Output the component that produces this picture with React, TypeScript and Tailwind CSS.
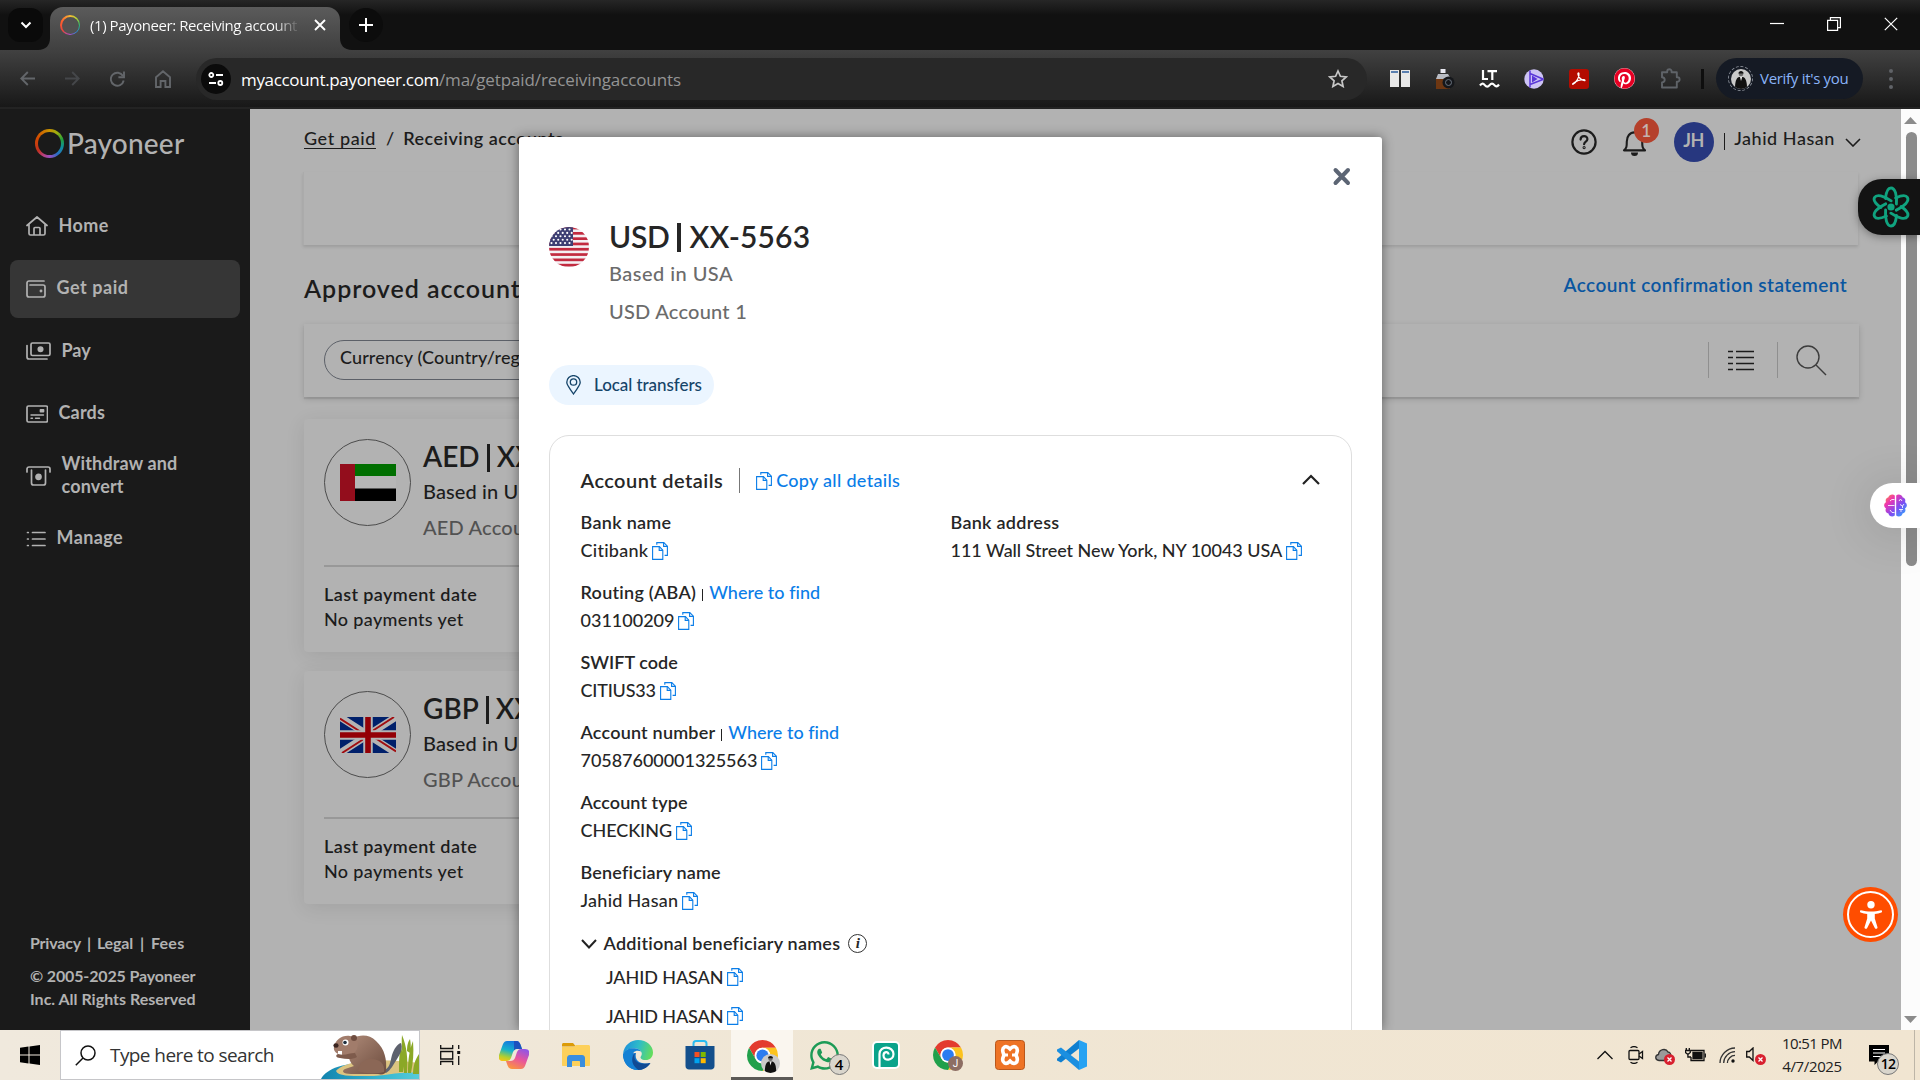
import React from 'react';
import { FaWhatsapp, FaPinterest } from 'react-icons/fa';

const cx = (...parts: (string | undefined)[]) => parts.filter(Boolean).join(' ');

/* ---------- shared icons ---------- */

function CopyIcon() {
  return (
    <svg width="16" height="18" viewBox="0 0 16 18" fill="none" stroke="#0a7de8" strokeWidth="1.1" className="mt-px shrink-0">
      <path d="M.6 4.6h6.8l3.4 3.6v9.2H.6z" />
      <path d="M7.2 4.8v3.6h3.6" />
      <path d="M4.8 2.8V.6h7l3.6 3.6v9.2h-2.8" />
      <path d="M11.6.8v3.6h3.6" />
    </svg>
  );
}

function ChromeLogo({ size }: { size: number }) {
  return (
    <svg width={size} height={size} viewBox="0 0 48 48">
      <path fill="#e33b2e" d="M24 12H44.78A24 24 0 0 0 3.22 12L13.6 30A12 12 0 0 1 24 12Z" />
      <path fill="#fcc31e" d="M44.78 12A24 24 0 0 1 24 48L34.39 30A12 12 0 0 0 24 12Z" />
      <path fill="#21a04b" d="M3.22 12L13.6 30A12 12 0 0 0 34.39 30L24 48A24 24 0 0 1 3.22 12Z" />
      <circle cx="24" cy="24" r="12" fill="#fff" />
      <circle cx="24" cy="24" r="9.4" fill="#2c7cf0" />
    </svg>
  );
}

function Portrait({ size }: { size: number }) {
  return (
    <svg width={size} height={size} viewBox="0 0 20 20">
      <defs>
        <clipPath id="portrait"><circle cx="10" cy="10" r="10" /></clipPath>
      </defs>
      <g clipPath="url(#portrait)">
        <rect width="20" height="20" fill="#c9c9c9" />
        <path d="M4 20c0-7 1-11 4-12h4c3 1 4 5 4 12z" fill="#101010" />
        <path d="M9 8l1 4 1.2-4z" fill="#eee" />
        <circle cx="10" cy="5" r="2.3" fill="#6b6b6b" />
        <path d="M7.4 4.6c0-3.4 5.2-3.4 5.2 0z" fill="#111" />
      </g>
    </svg>
  );
}

/* ---------- browser chrome ---------- */

function TabStrip() {
  return (
    <div className="flex h-[50px] shrink-0 items-start bg-[linear-gradient(#262626,#111_30%)]">
      <div className="mt-2 ml-2 flex h-[34px] w-[35px] items-center justify-center rounded-xl bg-[#0a0a0a]">
        <svg width="12" height="8" viewBox="0 0 12 8" fill="none" stroke="#fff" strokeWidth="2"><path d="M1.5 1.5L6 6l4.5-4.5" /></svg>
      </div>
      <div className="flex h-[43px] w-[7px] items-end justify-end self-end">
        <svg className="shrink-0" width="12" height="12" viewBox="0 0 12 12"><path d="M0 12c8 0 12-5 12-12v12z" fill="#414141" /></svg>
      </div>
      <div className="mt-[7px] flex h-[43px] w-[290px] items-center rounded-t-[13px] bg-[linear-gradient(#5b5b5b,#404040)] pb-[7px] pl-[10px]">
        <div className="flex size-5 items-center justify-center rounded-full bg-[conic-gradient(#f5b836,#b9d432_12%,#2fbf71_25%,#2490e8_38%,#b04fd0_50%,#e8453c_64%,#ff5f2e_82%,#f5b836)]">
          <div className="size-[17px] rounded-full bg-[#515151]" />
        </div>
        <span className="ml-[10px] w-[210px] overflow-hidden bg-[linear-gradient(90deg,#fff_88%,#6a6a6a_98%)] bg-clip-text font-['Open_Sans'] text-[15px] tracking-[-0.43px] whitespace-nowrap text-transparent">
          (1) Payoneer: Receiving account
        </span>
        <svg className="ml-[14px]" width="12" height="12" viewBox="0 0 12 12" stroke="#fff" strokeWidth="1.9"><path d="M1 1l10 10M11 1L1 11" /></svg>
      </div>
      <div className="flex h-[43px] w-[9px] items-end self-end">
        <svg className="shrink-0" width="12" height="12" viewBox="0 0 12 12"><path d="M0 0c0 7 4 12 12 12H0z" fill="#414141" /></svg>
      </div>
      <div className="mt-2 flex size-[34px] items-center justify-center rounded-full bg-[#0c0c0c]">
        <svg width="14" height="14" viewBox="0 0 14 14" stroke="#fff" strokeWidth="2"><path d="M7 0v14M0 7h14" /></svg>
      </div>
      <div className="mt-[17px] mr-[22px] ml-auto flex items-center gap-[43px]">
        <svg width="14" height="14" viewBox="0 0 14 14" stroke="#fff" strokeWidth="1.2"><path d="M0 6.5h14" /></svg>
        <svg width="14" height="14" viewBox="0 0 14 14" fill="none" stroke="#fff" strokeWidth="1.2"><path d="M.6 3.4h10v10h-10zM3.4 3V.6h10v10H11" /></svg>
        <svg width="14" height="14" viewBox="0 0 14 14" stroke="#fff" strokeWidth="1.2"><path d="M.8.8l12.4 12.4M13.2.8L.8 13.2" /></svg>
      </div>
    </div>
  );
}

function Extensions() {
  return (
    <div className="flex items-center">
      <svg width="20" height="17" viewBox="0 0 20 17"><path d="M0 0h9v17H0zM11 0h9v17h-9z" fill="#e8e8e8" /><path d="M1 1h7v2H1zM12 1h7v2h-7z" fill="#5a7fb0" /></svg>
      <svg className="ml-[25px]" width="20" height="20" viewBox="0 0 20 20">
        <path d="M1 9h14v11H1z" fill="#6e3712" /><path d="M3 5h10l3 5H1z" fill="#b9bcc4" /><path d="M5.5 0h5v4h-5z" fill="#e9e9f2" />
        <circle cx="13.5" cy="13.5" r="6" fill="#15171b" /><circle cx="13.5" cy="13.5" r="3" fill="none" stroke="#6b7480" strokeWidth="1" />
      </svg>
      <svg className="mt-px ml-[24px]" width="21" height="18" viewBox="0 0 21 18" fill="none" stroke="#fff" strokeWidth="2.2">
        <path d="M4 0v9h5M8.5 1.1h9.500M13.300 1.100v9" /><path d="M1 15.500c1.800-2.400 3.200-2.400 4.800-.4s3.200 2 4.800 0 3.200-2 4.800 0 3.200 1.400 4.600-.6" />
      </svg>
      <svg className="ml-[24px]" width="20" height="20" viewBox="0 0 20 20">
        <circle cx="10" cy="10" r="9.7" fill="#cdc3f5" />
        <path d="M6 1.500v17M6 15.500l13.500-5.300M6 4.500l13.500 5.700" stroke="#5a37d8" strokeWidth="1.500" fill="none" /><path d="M8 6.500l5.500 3.500L8 13.500z" fill="#5a37d8" />
      </svg>
      <svg className="ml-[25px]" width="20" height="20" viewBox="0 0 20 20">
        <rect width="20" height="20" rx="3" fill="#b30b00" />
        <path d="M4 15.300c3.500-2 6.600-7.600 6-10.800-.2-1-1.500-.5-1 1 .8 3.200 3 5.500 6.500 6.200.9.200.6-1-.6-1-3.800 0-7 1-10.500 3.600-.9.700-1.100 1.100-.4 1z" fill="none" stroke="#fff" strokeWidth="1.200" />
      </svg>
      <div className="ml-[25px] flex size-[21px] items-center justify-center rounded-full bg-white"><FaPinterest size={21} color="#e60023" /></div>
      <svg className="ml-[25px]" width="21" height="21" viewBox="0 0 21 21" fill="none" stroke="#5f6368" strokeWidth="1.900">
        <path d="M2 4.300h5.200V3.500a2.200 2.200 0 0 1 4.400 0v.8h5.200v5h.6a2.200 2.200 0 0 1 0 4.400h-.6v5.800H2v-5c3.600-.3 3.600-5 0-5.300z" strokeLinejoin="round" />
      </svg>
      <div className="ml-[20px] h-5 w-[3px] bg-[#0e0e0e]" />
    </div>
  );
}

function Toolbar() {
  return (
    <div className="flex h-[59px] shrink-0 items-center border-b-2 border-[#232323] bg-[linear-gradient(#414141,#181818)]">
      <div className="flex items-center gap-[30px] pl-5">
        <svg width="15" height="15" viewBox="0 0 15 15" fill="none" stroke="#63666a" strokeWidth="1.900"><path d="M15 7.500H1.500M7.800 1L1.300 7.500l6.500 6.500" /></svg>
        <svg width="15" height="15" viewBox="0 0 15 15" fill="none" stroke="#45474a" strokeWidth="1.900"><path d="M0 7.500h13.500M7.200 1l6.500 6.500L7.200 14" /></svg>
        <svg width="15" height="16" viewBox="0 0 15 16" fill="none" stroke="#63666a" strokeWidth="1.900"><path d="M13 5A6.500 6.500 0 1 0 13.700 9.500" /><path d="M14 .5v5.800H8.400" /></svg>
        <svg width="16" height="18" viewBox="0 0 16 18" fill="none" stroke="#63666a" strokeWidth="1.900"><path d="M1 7.200L8 1.300l7 5.900V17h-4.600v-6H5.600v6H1z" /></svg>
      </div>
      <div className="ml-[25px] flex h-[42px] w-[1171px] items-center rounded-full bg-[#282828] pl-[5px]">
        <div className="flex size-[30px] items-center justify-center rounded-full bg-[#0b0b0b]">
          <svg width="16" height="14" viewBox="0 0 16 14" fill="none" stroke="#fff" strokeWidth="1.800"><circle cx="3.300" cy="3" r="2" /><path d="M8 3h7M1 11h7" /><circle cx="12.300" cy="11" r="2" /></svg>
        </div>
        <span className="mt-[2px] ml-[10px] font-['Open_Sans'] text-[17px] tracking-[-0.33px] whitespace-nowrap text-white">myaccount.payoneer.com</span>
        <span className="mt-[2px] font-['Open_Sans'] text-[17px] tracking-[-0.11px] whitespace-nowrap text-[#949494]">/ma/getpaid/receivingaccounts</span>
        <svg className="mr-[19px] ml-auto" width="20" height="19" viewBox="0 0 20 19" fill="none" stroke="#c7c7c7" strokeWidth="1.700"><path d="M10 2l2.400 5.300 5.800.6-4.300 3.900 1.200 5.700L10 14.600l-5.100 2.900 1.200-5.700L1.800 7.900l5.800-.6z" /></svg>
      </div>
      <div className="pl-[23px]"><Extensions /></div>
      <div className="ml-3 flex h-[41px] w-[147px] items-center rounded-full bg-[#151a24] pl-3">
        <div className="flex size-[25px] items-center justify-center rounded-full border-[1.500px] border-dashed border-[#8a8f98]"><Portrait size={20} /></div>
        <span className="ml-[7px] font-['Open_Sans'] text-[15px] tracking-[-0.3px] whitespace-nowrap text-[#8ab4f8]">Verify it's you</span>
      </div>
      <div className="ml-[26px] flex flex-col gap-1">
        {[0, 1, 2].map((i) => <div key={i} className="size-[4px] rounded-full bg-[#606367]" />)}
      </div>
    </div>
  );
}

/* ---------- sidebar ---------- */

const line = { fill: 'none', stroke: '#b2b2b2', strokeWidth: 1.7, strokeLinejoin: 'round', strokeLinecap: 'round' } as const;

const NAV = [
  { label: 'Home', track: 'tracking-[0.4px]', icon: <svg width="22" height="20" viewBox="0 0 22 20" {...line}><path d="M1 9.500L11 1l10 8.500M3 8.500v9a1.500 1.500 0 0 0 1.500 1.500h13a1.500 1.500 0 0 0 1.500-1.500v-9M8 19v-6.500a1 1 0 0 1 1-1h4a1 1 0 0 1 1 1V19" /></svg> },
  { label: 'Get paid', track: 'tracking-[0.55px]', active: true, icon: <svg width="20" height="18" viewBox="0 0 20 18" {...line}><path d="M18 1H3a2 2 0 0 0-2 2v12a2 2 0 0 0 2 2h14a2 2 0 0 0 2-2V7a2 2 0 0 0-2-2H4" /><circle cx="15" cy="11" r=".6" /></svg> },
  { label: 'Pay', track: 'tracking-[0px]', icon: <svg width="25" height="18" viewBox="0 0 25 18" {...line}><rect x="5" y="1" width="19" height="12.500" rx="1.500" /><path d="M1 3.500V15a2 2 0 0 0 2 2h18" /><circle cx="14.500" cy="7.200" r="2.200" fill="#b2b2b2" /></svg> },
  { label: 'Cards', track: 'tracking-[0.2px]', icon: <svg width="22" height="18" viewBox="0 0 22 18" {...line}><rect x="1" y="1" width="20.500" height="16" rx="1.500" /><path d="M5 10h12.500M5 13.200h1.500M9.500 13.200h4" strokeWidth="1.400" /><rect x="14.500" y="4.800" width="3" height="1.800" fill="#b2b2b2" /></svg> },
  { label: 'Withdraw and convert', track: 'tracking-[0.16px]', icon: <svg width="25" height="20" viewBox="0 0 25 20" {...line}><path d="M1 6V3a2 2 0 0 1 2-2h19a2 2 0 0 1 2 2v3M5.500 4v13a2 2 0 0 0 2 2h10a2 2 0 0 0 2-2V4" /><circle cx="12.500" cy="10.800" r="2.500" fill="#b2b2b2" /></svg> },
  { label: 'Manage', track: 'tracking-[0.4px]', icon: <svg width="20" height="16" viewBox="0 0 20 16" {...line}><path d="M6.500 1.500H19M6.500 8H19M6.500 14.500H19M1.500 1.500h.8M1.500 8h.8M1.500 14.500h.8" /></svg> },
];

function Sidebar() {
  return (
    <aside className="flex w-[250px] shrink-0 flex-col bg-[#1a1a1a] text-[#b2b2b2]">
      <div className="mt-5 ml-[35px] flex h-[29px] items-center">
        <div className="flex size-[29px] items-center justify-center rounded-full bg-[conic-gradient(#c89300,#9bb010_10%,#22a03c_20%,#0f8fa0_30%,#2b6cc4_40%,#9a4fc0_50%,#b8407a_58%,#c03020_66%,#d24a00_82%,#c89300)]">
          <div className="size-[23px] rounded-full bg-[#1a1a1a]" />
        </div>
        <span className="ml-[3px] text-[28px] leading-[29px] font-medium tracking-[0.2px]">Payoneer</span>
      </div>
      <nav className="mx-[10px] mt-[39px] flex flex-col gap-[4.500px]">
        {NAV.map((n) => (
          <div key={n.label} className={cx('flex h-[58px] items-center gap-[10.500px] rounded-lg pl-4', n.active ? 'bg-[#363636]' : undefined)}>
            <span className="shrink-0">{n.icon}</span>
            <span className={cx('-mt-[2px] max-w-[130px] text-lg leading-[23px] font-bold', n.track)}>{n.label}</span>
          </div>
        ))}
      </nav>
      <div className="mt-auto pb-[20px] pl-[30px] text-base leading-[23px] font-bold">
        <div className="mb-[10px] flex tracking-[-0.2px]">
          <span>Privacy</span><span className="ml-[6px]">|</span><span className="ml-[6px]">Legal</span><span className="ml-[7px]">|</span><span className="ml-[7px] tracking-[0.3px]">Fees</span>
        </div>
        <div className="tracking-[-0.14px]">© 2005-2025 Payoneer</div>
        <div>Inc. All Rights Reserved</div>
      </div>
    </aside>
  );
}

/* ---------- page content ---------- */

function UaeFlag() {
  return (
    <svg width="56" height="37" viewBox="0 0 56 37"><path d="M0 0h15v37H0z" fill="#930d1c" /><path d="M15 0h41v12H15z" fill="#006f00" /><path d="M15 12h41v12.500H15z" fill="#b6b6b6" /><path d="M15 24.500h41V37H15z" fill="#000" /></svg>
  );
}

function UkFlag() {
  return (
    <svg width="56" height="36" viewBox="0 0 56 36">
      <path d="M0 0h56v36H0z" fill="#00206b" />
      <path d="M0 0l56 36M56 0L0 36" stroke="#b4b4b4" strokeWidth="7.200" />
      <path d="M0 1.500l24 15.500M56 34.500L32 19M54 0L30 15.500M2 36l24-15.500" stroke="#a00d10" strokeWidth="1.900" />
      <path d="M28 0v36M0 18h56" stroke="#b4b4b4" strokeWidth="9.500" />
      <path d="M28 0v36M0 18h56" stroke="#930006" strokeWidth="5.600" />
    </svg>
  );
}

function AccountCard({ code, flag }: { code: string; flag: React.ReactNode }) {
  return (
    <section className="h-[233px] w-[500px] rounded-sm bg-[#b2b2b2] pl-5 shadow-[0_4px_20px_rgba(0,0,0,0.09)]">
      <div className="flex h-[146px]">
        <div className="mt-5 flex size-[87px] shrink-0 items-center justify-center rounded-full border border-[#4c4c4c]">{flag}</div>
        <div className="ml-3 pt-[19px] whitespace-nowrap">
          <div className="flex h-9 items-center text-[28px] leading-9 font-semibold">
            {code}
            <span className="mx-[7px] mt-[4px] h-7 w-[3px] shrink-0 bg-[#1c1c1c]" />
            XX
          </div>
          <div className="mt-[2px] text-xl leading-[30px] font-medium tracking-[0.100px]">Based in U</div>
          <div className="mt-[6px] text-xl leading-[30px] font-medium tracking-[0.200px] text-[#525252]">{code} Accou</div>
        </div>
      </div>
      <div className="h-[2px] w-[460px] bg-[#989898]" />
      <div className="pt-[15px] text-lg leading-[25px]">
        <div className="font-semibold tracking-[0.400px]">Last payment date</div>
        <div className="font-medium tracking-[0.350px]">No payments yet</div>
      </div>
    </section>
  );
}

function PageHeader() {
  return (
    <header className="flex h-[63px] items-start justify-between pr-[40px] pl-[54px]">
      <div className="flex pt-4 text-lg leading-[27px] font-medium">
        <span className="tracking-[0.600px] underline decoration-1 underline-offset-[3px]">Get paid</span>
        <span className="ml-[10px]">/</span>
        <span className="ml-[9px] font-semibold tracking-[0.480px]">Receiving accounts</span>
      </div>
      <div className="flex">
        <svg className="mt-5" width="26" height="26" viewBox="0 0 26 26" fill="none" stroke="#1c1c1c" strokeWidth="2.200"><circle cx="13" cy="13" r="11.600" /><path d="M9.600 10.600c0-4.600 7-4.400 6.800-.4-.1 2.400-3.300 2.400-3.300 5" strokeLinecap="round" /><circle cx="13.100" cy="18.600" r=".5" /></svg>
        <div className="relative ml-[25px] w-9">
          <svg className="mt-[19px]" width="25" height="28" viewBox="0 0 25 28"><path d="M2 22.400h21c-2.600-2.200-2.800-4-2.800-9 0-5-3-9-7.700-9s-7.700 4-7.700 9c0 5-.2 6.800-2.800 9z" fill="none" stroke="#1c1c1c" strokeWidth="2.100" strokeLinejoin="round" /><path d="M9 24.400h7a3.500 3.500 0 0 1-7 0z" fill="#1c1c1c" /></svg>
          <div className="absolute top-[9px] left-[12px] flex size-[25px] items-center justify-center rounded-full bg-[#b5402b] text-[17px] leading-none font-semibold text-[#c4b4b0]">1</div>
        </div>
        <div className="mt-[13px] ml-[16px] flex size-10 items-center justify-center rounded-full bg-[#27377f] pb-1 text-lg font-bold tracking-[-0.500px] text-[#b2b2b2]">JH</div>
        <div className="mt-6 ml-[10px] h-[17px] w-[1.500px] bg-[#1c1c1c]" />
        <span className="mt-[16px] ml-[9px] text-lg leading-[27px] font-medium tracking-[0.550px]">Jahid Hasan</span>
        <svg className="mt-[29px] ml-[10px]" width="16" height="9" viewBox="0 0 16 9" fill="none" stroke="#1c1c1c" strokeWidth="1.600"><path d="M1 1l7 7 7-7" /></svg>
      </div>
    </header>
  );
}

function FilterBar() {
  return (
    <div className="flex h-[73px] w-[1555px] items-start bg-[#b2b2b2] shadow-[0_2px_1px_rgba(0,0,0,0.08),0_2px_6px_rgba(0,0,0,0.15)]">
      <div className="mt-4 ml-5 h-10 w-[300px] rounded-full border border-[#5c6068] pl-[15px] text-lg leading-[33px] font-medium tracking-[0.120px]">
        Currency (Country/region)
      </div>
      <div className="mt-[18px] mr-[32px] ml-auto flex h-9 items-center">
        <div className="h-9 w-px bg-[#8f8f8f]" />
        <svg className="ml-[19px]" width="26" height="21" viewBox="0 0 26 21" stroke="#1c1c1c" strokeWidth="1.300"><path d="M0 1.500h5M8 1.500h18M0 7.500h5M8 7.500h18M0 13.500h5M8 13.500h18M0 19.500h5M8 19.500h18" /></svg>
        <div className="ml-[23px] h-9 w-px bg-[#8f8f8f]" />
        <svg className="mt-px ml-[18px]" width="31" height="31" viewBox="0 0 31 31" fill="none" stroke="#3c3c3c" strokeWidth="1.400"><circle cx="12" cy="12" r="11" /><path d="M20 20l10 10" /></svg>
      </div>
    </div>
  );
}

function Content() {
  return (
    <main className="min-w-0 flex-1 bg-[#b2b2b2] text-[#1c1c1c]">
      <PageHeader />
      <div className="ml-[53px] h-[73px] w-[1555px] border-l border-[#ababab] shadow-[0_2px_3px_rgba(0,0,0,0.12)]" />
      <div className="ml-[54px] flex h-[79px] w-[1555px] items-start justify-between pt-[27px] pr-3">
        <h2 className="text-[25px] leading-8 font-semibold tracking-[0.950px]">Approved accounts</h2>
        <a className="text-[19px] leading-[25px] font-semibold tracking-[0.410px] text-[#0a56a0]">Account confirmation statement</a>
      </div>
      <div className="ml-[54px] flex flex-col">
        <FilterBar />
        <div className="mt-[22px] flex flex-col gap-[19px]">
          <AccountCard code="AED" flag={<UaeFlag />} />
          <AccountCard code="GBP" flag={<UkFlag />} />
        </div>
      </div>
    </main>
  );
}

function Scrollbar() {
  return (
    <div className="flex w-[19px] shrink-0 flex-col items-center bg-[#fcfcfc]">
      <svg className="mt-2 shrink-0" width="13" height="7" viewBox="0 0 13 7"><path d="M0 7L6.500 0 13 7z" fill="#8b8b8b" /></svg>
      <div className="mt-2 ml-px h-[434px] w-[11px] rounded-full bg-[#8b8b8b]" />
      <svg className="mt-auto mb-[7px] shrink-0" width="13" height="7" viewBox="0 0 13 7"><path d="M0 0h13L6.500 7z" fill="#8b8b8b" /></svg>
    </div>
  );
}

/* ---------- account dialog ---------- */

function UsFlag() {
  return (
    <svg width="40" height="40" viewBox="0 0 40 40" className="shrink-0">
      <defs><clipPath id="usa"><circle cx="20" cy="20" r="20" /></clipPath></defs>
      <g clipPath="url(#usa)">
        <rect width="40" height="40" fill="#f4f0f3" />
        {[0, 1, 2, 3, 4, 5, 6, 7].map((i) => <rect key={i} y={i * 5.3 - 0.3} width="40" height="2.700" fill="#c22b40" />)}
        <rect width="24" height="19" fill="#3d3f73" />
        {[0, 1, 2, 3, 4].map((r) => [0, 1, 2, 3, 4].map((c) => <circle key={`${r}-${c}`} cx={2.500 + c * 4.500 + (r % 2) * 2.200} cy={2.500 + r * 3.400} r="1.050" fill="#fff" />))}
      </g>
    </svg>
  );
}

type Field = { label: string; labelTrack: string; value: string; valueTrack: string; help?: boolean };

const FIELDS: Field[] = [
  { label: 'Bank name', labelTrack: 'tracking-[0.300px]', value: 'Citibank', valueTrack: 'tracking-[0.260px]' },
  { label: 'Routing (ABA)', labelTrack: 'tracking-[0.260px]', value: '031100209', valueTrack: 'tracking-[0px]', help: true },
  { label: 'SWIFT code', labelTrack: 'tracking-[0.020px]', value: 'CITIUS33', valueTrack: 'tracking-[-0.200px]' },
  { label: 'Account number', labelTrack: 'tracking-[0.200px]', value: '70587600001325563', valueTrack: 'tracking-[-0.040px]', help: true },
  { label: 'Account type', labelTrack: 'tracking-[0.080px]', value: 'CHECKING', valueTrack: 'tracking-[-0.060px]' },
  { label: 'Beneficiary name', labelTrack: 'tracking-[0.180px]', value: 'Jahid Hasan', valueTrack: 'tracking-[0.280px]' },
];

function FieldRow({ f }: { f: Field }) {
  return (
    <div className="h-[70px] text-lg leading-7 whitespace-nowrap last:h-[71px]">
      <div className="flex items-center">
        <span className={cx('font-semibold', f.labelTrack)}>{f.label}</span>
        {f.help && (
          <>
            <span className="mt-[5px] ml-[6px] h-3 w-px bg-[#222]" />
            <span className="ml-[6px] font-medium tracking-[0.020px] text-[#0a7de8]">Where to find</span>
          </>
        )}
      </div>
      <div className="flex items-center gap-1">
        <span className={cx('font-medium', f.valueTrack)}>{f.value}</span>
        <CopyIcon />
      </div>
    </div>
  );
}

function AccountDialog() {
  return (
    <div className="absolute top-[137px] left-[519px] h-[893px] w-[863px] overflow-hidden rounded-t-[3px] bg-white px-[30px] text-[#262626] shadow-[0_0_12px_rgba(0,0,0,0.45)]">
      <div className="flex h-[81px] justify-end pt-[30px] pr-px">
        <svg width="19" height="19" viewBox="0 0 19 19" stroke="#5c6574" strokeWidth="4" strokeLinecap="round"><path d="M3.500 3l12.500 13M16 3L3.500 16" /></svg>
      </div>
      <div className="flex gap-[20px]">
        <div className="pt-[9px]"><UsFlag /></div>
        <div>
          <div className="flex h-9 items-center text-[30px] leading-9 font-semibold">
            <span className="tracking-[-0.300px]">USD</span>
            <span className="mt-[2px] mr-[8px] ml-[8px] h-[29px] w-[4px] bg-[#262626]" />
            <span className="tracking-[0.160px]">XX-5563</span>
          </div>
          <div className="mt-[4px] text-xl leading-[30px] font-medium tracking-[0.460px] text-[#6b6b6b]">Based in USA</div>
          <div className="mt-2 text-xl leading-[30px] font-medium tracking-[0.240px] text-[#6b6b6b]">USD Account 1</div>
        </div>
      </div>
      <div className="mt-[39px] flex h-10 w-[165px] items-center rounded-full bg-[#ebf5ff] text-[#154469]">
        <svg className="ml-[17px]" width="15" height="20" viewBox="0 0 15 20" fill="none" stroke="#154469" strokeWidth="1.300"><path d="M7.500 19C4 13.500.8 10.500.8 7.300a6.700 6.700 0 0 1 13.400 0C14.200 10.500 11 13.500 7.500 19z" /><circle cx="7.500" cy="7" r="3.200" /></svg>
        <span className="-mt-px ml-[13px] text-[17px] leading-6 font-medium tracking-[-0.060px] whitespace-nowrap">Local transfers</span>
      </div>
      <div className="mt-[30px] h-[700px] rounded-[20px] border border-[#dedede] pt-[27px] pl-[30.500px]">
        <div className="flex h-9 items-center pr-[30px] whitespace-nowrap">
          <span className="-mt-[3px] text-xl leading-9 font-semibold tracking-[0.440px]">Account details</span>
          <span className="-mt-[2px] ml-[16px] h-[25px] w-px bg-[#777]" />
          <span className="-mt-[2px] ml-[16px] flex items-center gap-[4px] text-lg font-medium tracking-[0.310px] text-[#0a7de8]"><CopyIcon />Copy all details</span>
          <svg className="-mt-[4px] mr-px ml-auto" width="18" height="11" viewBox="0 0 18 11" fill="none" stroke="#222" strokeWidth="2.200"><path d="M1 10l8-8 8 8" /></svg>
        </div>
        <div className="mt-[9px] flex">
          <div className="w-[370px]">
            {FIELDS.map((f) => <FieldRow key={f.label} f={f} />)}
          </div>
          <FieldRow f={{ label: 'Bank address', labelTrack: 'tracking-[0.280px]', value: '111 Wall Street New York, NY 10043 USA', valueTrack: 'tracking-[-0.040px]' }} />
        </div>
        <div className="flex h-7 items-center">
          <svg className="mt-px" width="16" height="10" viewBox="0 0 16 10" fill="none" stroke="#222" strokeWidth="2"><path d="M1 1l7 7.500L15 1" /></svg>
          <span className="ml-[7px] text-lg leading-7 font-semibold tracking-[0.240px]">Additional beneficiary names</span>
          <span className="ml-2 flex size-[19px] items-center justify-center rounded-full border border-[#333] font-['Liberation_Serif'] text-[15px] leading-none font-bold italic">i</span>
        </div>
        {[0, 1].map((i) => (
          <div key={i} className="flex h-[39px] items-center gap-1 pl-[25.500px] text-lg font-medium tracking-[-0.100px]">JAHID HASAN<CopyIcon /></div>
        ))}
      </div>
    </div>
  );
}

/* ---------- floating widgets ---------- */

function FloatingWidgets() {
  return (
    <>
      <div className="absolute top-[179px] left-[1858px] flex h-14 w-[62px] items-center rounded-l-[24px] bg-[#131313] pl-[13px] shadow-[0_2px_8px_rgba(0,0,0,0.35)]">
        <svg width="40" height="42" viewBox="-20 -21 40 42" fill="none" stroke="#10a37f" strokeWidth="2.900" strokeLinecap="round">
          {[0, 60, 120, 180, 240, 300].map((a) => (
            <path key={a} d="M-5.500 -8.500C-5 -14 -3.200 -19 0 -19C4 -19 6.200 -12 5.400 -3" transform={`rotate(${a})`} />
          ))}
          <circle r="3.600" fill="#10a37f" stroke="none" />
        </svg>
      </div>
      <div className="absolute top-[483px] left-[1870px] flex h-[45px] w-[50px] items-center rounded-l-full bg-white pl-[14px] shadow-[0_4px_50px_rgba(0,0,0,0.16)]">
        <svg width="23" height="23" viewBox="0 0 23 23">
          <defs><linearGradient id="brain" x1="0" y1="0" x2="1" y2="1"><stop offset="0" stopColor="#ff9a2e" /><stop offset=".28" stopColor="#ee35b0" /><stop offset=".6" stopColor="#7d4df2" /><stop offset="1" stopColor="#22b8ff" /></linearGradient></defs>
          <path d="M10.800 1.500v20c-2.400 2.300-6 .7-6.300-2C1.500 19 1 16.300 2 14.500-.6 12.800-.4 9.600 2 8.300 1 5.600 2.400 4 4.200 3.600 5 .4 9-.6 10.800 1.500zM12.200 1.500v20c2.400 2.300 6 .7 6.300-2 3-.5 3.500-3.200 2.500-5 2.600-1.700 2.400-4.900 0-6.200 1-2.700-.4-4.300-2.200-4.700C18 .4 14-.6 12.200 1.500z" fill="url(#brain)" />
          <path d="M10.500 5.500H7.800L6 7M4 11.500h6.500M6 16l2 2.500h2.500M15 7l1.500-2L18 7M16 10.500l2.500 1.500L20 10M18.500 12v2M15 15.500h4M17 15.500V18" stroke="#fff" strokeWidth="1" fill="none" opacity=".85" />
        </svg>
      </div>
      <div className="absolute top-[887px] left-[1843px] flex size-[55px] items-center justify-center rounded-full bg-[#ff4d00]">
        <div className="flex size-[47px] items-center justify-center rounded-full border-2 border-white">
          <svg width="22" height="28" viewBox="0 0 22 28" fill="#fff"><circle cx="11" cy="3.700" r="3.700" /><path d="M.8 9.200c3.500 1 6.500 1.200 10.200 1.200s6.700-.2 10.200-1.200c1 0 1.200 2 .2 2.300-2.200.8-4.200 1.300-6.600 1.600v4.400l2.700 8.700c.3 1.600-2 2.300-2.700.8L11 19.500 7.200 27c-.7 1.500-3 .8-2.700-.8l2.700-8.700v-4.400C4.800 12.800 2.800 12.300.6 11.500c-1-.3-.8-2.300.2-2.300z" /></svg>
        </div>
      </div>
    </>
  );
}

/* ---------- taskbar ---------- */

function Beaver() {
  return (
    <svg width="98" height="48" viewBox="0 0 98 48">
      <defs>
        <linearGradient id="water" x1="0" x2="1"><stop offset="0" stopColor="#1283ae" /><stop offset=".6" stopColor="#35b5d0" /><stop offset="1" stopColor="#58cbd8" /></linearGradient>
        <linearGradient id="fur" x1="0" y1="0" x2="1" y2="1"><stop offset="0" stopColor="#b08c7a" /><stop offset="1" stopColor="#6d4c3e" /></linearGradient>
      </defs>
      <path d="M0 48C6 36 30 30 60 32l38 8v8z" fill="url(#water)" />
      <path d="M15 40c8-10 40-14 83-8v10c-20-2-35 4-55 3-14 0-26 0-28-5z" fill="#dcc481" />
      <g fill="#8ba827"><path d="M78 41c0-10 0-18 2-24 3 8 3 14 2 24zM83 42c-1-14-3-28-2-38 5 12 6 24 5 38zM87 42c0-12 1-22 5-32 1 12 0 22-2 32zM92 43c0-8 2-14 6-20v20zM86 20c0-6 1-9 3-12 1 6 1 9 0 14z" /></g>
      <path d="M62 40c7-3 7-8 9-16 2-6 5-11 9-12 2 5 0 10-4 16-4 6-6 11-11 14z" fill="#5d616d" />
      <path d="M24 18C30 3 46 1 55 10c9 8 11 19 10 30 0 3-4 4-8 3H30c-8 0-10-3-6-5l9-3c-4-3-6-9-5-13z" fill="url(#fur)" />
      <path d="M50 28c-8 0-12 5-13 12 6 3 20 3 26 1 1-8-4-13-13-13z" fill="#8b6756" />
      <path d="M13 16c2-8 8-12 16-11 7 1 9 7 7 13-2 5-8 7-14 6-6 0-10-4-9-8z" fill="#a17c6b" />
      <circle cx="33" cy="7" r="3" fill="#6f4d40" />
      <circle cx="24.500" cy="11.500" r="3" fill="#fff" /><circle cx="24" cy="11.500" r="1.800" fill="#21303f" />
      <ellipse cx="15" cy="14.500" rx="2.600" ry="2.200" fill="#3a2420" />
      <path d="M17 20h4v5h-4z" fill="#fff" />
      <path d="M34 22c-6 0-10 3-17 1-3 1-2 4 2 4 6 1 12 2 17-1z" fill="#7e5b4c" />
    </svg>
  );
}

function TaskIcon({ children, active }: { children: React.ReactNode; active?: boolean }) {
  return (
    <div className={cx('flex h-[50px] w-[62px] shrink-0 items-center justify-center', active ? 'border-b-[3px] border-[#5c5a57] bg-[#faf6ef] pt-[3px]' : undefined)}>{children}</div>
  );
}

function RedX() {
  return (
    <svg className="absolute right-0 bottom-0" width="11" height="11" viewBox="0 0 11 11"><circle cx="5.500" cy="5.500" r="5.500" fill="#d8202f" /><path d="M3.500 3.500l4 4M7.500 3.500l-4 4" stroke="#fff" strokeWidth="1.300" /></svg>
  );
}

function Taskbar() {
  return (
    <footer className="relative flex h-[50px] shrink-0 items-center bg-[linear-gradient(90deg,#f0e9dd,#f0e6d4_50%,#f1e5d1)]">
      <div className="flex w-[60px] justify-center">
        <svg width="20" height="20" viewBox="0 0 20 20"><path d="M0 2.800L8.500 1.500v8H0zM9.500 1.400L20 0v9.500H9.500zM0 10.500h8.500v8L0 17.200zM9.500 10.500H20V20L9.500 18.600z" fill="#000" /></svg>
      </div>
      <div className="flex h-[50px] w-[360px] items-center border border-[#c6c6c9] bg-white">
        <svg className="ml-[14px]" width="21" height="21" viewBox="0 0 21 21" fill="none" stroke="#111" strokeWidth="1.500"><circle cx="13" cy="8" r="7" /><path d="M8 13L.8 20.200" /></svg>
        <span className="ml-[14px] w-[210px] font-['Open_Sans'] text-[19px] tracking-[-0.580px] whitespace-nowrap text-[#333]">Type here to search</span>
        <div className="ml-auto"><Beaver /></div>
      </div>
      <div className="flex w-[61px] justify-center">
        <svg width="21" height="20" viewBox="0 0 21 20" fill="none" stroke="#111" strokeWidth="1.300"><path d="M.7 0v3.500h12V0M.7 6.500h12v7.500H.7zM.7 20v-3.500h12V20M18.700 0v4M18.700 11v9" /><path d="M17.200 6h3v3h-3z" fill="#111" stroke="none" /></svg>
      </div>
      <div className="flex w-[64px] justify-center pl-px">
        <svg width="30" height="28" viewBox="0 0 30 28">
          <defs>
            <linearGradient id="cop1" x1="0.500" y1="0" x2="0.200" y2="1"><stop offset="0" stopColor="#1577e0" /><stop offset=".45" stopColor="#17b3c9" /><stop offset=".8" stopColor="#b5cf2d" /><stop offset="1" stopColor="#f5c518" /></linearGradient>
            <linearGradient id="cop2" x1="0.800" y1="0" x2="0.300" y2="1"><stop offset="0" stopColor="#8d56e8" /><stop offset=".5" stopColor="#e8559c" /><stop offset="1" stopColor="#fb9440" /></linearGradient>
          </defs>
          <path d="M8 0h9c3 0 4 2 5 5l1 3h-5c-2 0-3 1-4 3l-2 6c-1 2-2 3-4 3H4c-4 0-5-3-4-6L4 3c1-2 2-3 4-3z" fill="url(#cop1)" />
          <path d="M22 28h-9c-3 0-4-2-5-5l-1-3h4c3 0 4-1 5-3l2-6c1-2 2-3 4-3h4c4 0 5 3 4 6l-4 11c-1 2-2 3-4 3z" fill="url(#cop2)" />
          <path d="M15 0h3c2 0 3 2 4 5l1 3h-5c-2 0-2.500.600-3 1.500z" fill="#1e49b8" opacity=".85" />
        </svg>
      </div>
      <TaskIcon>
        <svg width="28" height="24" viewBox="0 0 28 24"><path d="M0 1.500C0 .7.700 0 1.500 0H11l3 3.500H0z" fill="#dc9b07" /><path d="M0 4h12l2-2h12.500c.8 0 1.500.7 1.500 1.500V22c0 .6-.4 1-1 1H1c-.6 0-1-.4-1-1z" fill="#fdd05a" /><path d="M5 24v-9c0-1.500 1-3 3-3h12c2 0 3 1.500 3 3v9h-5v-5c0-.6-.4-1-1-1h-6c-.6 0-1 .4-1 1v5z" fill="#3a8ede" /></svg>
      </TaskIcon>
      <TaskIcon>
        <svg width="30" height="30" viewBox="0 0 30 30">
          <defs><linearGradient id="edge" x1="0" y1=".3" x2="1" y2=".5"><stop offset="0" stopColor="#1d8fdc" /><stop offset=".5" stopColor="#2ebcc8" /><stop offset="1" stopColor="#64dd5c" /></linearGradient></defs>
          <path d="M0 14C0 23 6 30 15 30c5 0 10-3 12-7-9 2-16-2-14-10z" fill="#1273c9" />
          <path d="M0 14C1 5 8 0 15 0c9 0 15 6 15 12.500 0 5-3.500 7.500-7 7.500-3 0-5.500-1-5.500-2.600 0-1 1.300-1.500 1.300-3.700 0-3-3.300-5.500-7.300-5.500C6 8.200 2 10.500 0 14z" fill="url(#edge)" />
          <path d="M0 14c2-4 6-6 11.500-5.800 3 0 5.500 1.300 6.700 3.300C12 9 8 13 10 19c1 5 5 9 9 10.500C8 32 0 24 0 14z" fill="#1380d4" />
          <path d="M12 13c-3 7 3 13 15.500 10-2.500 4-7 7-12 7C9 26 7 18 12 13z" fill="#104a94" />
        </svg>
      </TaskIcon>
      <TaskIcon>
        <svg width="30" height="30" viewBox="0 0 30 30"><path d="M8.500 7V3.500c0-1.400 1-2.500 2.500-2.500h8c1.500 0 2.500 1.100 2.500 2.500V7" fill="none" stroke="#2bbcf0" strokeWidth="2" /><path d="M.5 6h29v20c0 2-1.500 3.500-3.500 3.500H4C2 29.500.5 28 .5 26z" fill="#134f8c" /><path d="M9.500 12h5v5h-5z" fill="#f25022" /><path d="M15.700 12h5v5h-5z" fill="#7fba00" /><path d="M9.500 18.200h5v5h-5z" fill="#00a4ef" /><path d="M15.700 18.200h5v5h-5z" fill="#ffb900" /></svg>
      </TaskIcon>
      <TaskIcon active>
        <div className="relative"><ChromeLogo size={31} /><div className="absolute -right-[2px] -bottom-[2px]"><Portrait size={19} /></div></div>
      </TaskIcon>
      <TaskIcon>
        <div className="relative"><FaWhatsapp size={33} color="#1c9b56" /><div className="absolute -right-[9px] -bottom-[3px] flex size-[21px] items-center justify-center rounded-full border border-[#777] bg-[#d9d5cc] font-['Open_Sans'] text-[15px] leading-none font-semibold text-black">4</div></div>
      </TaskIcon>
      <TaskIcon>
        <div className="flex size-[28px] items-center justify-center rounded-[5px] bg-white">
          <svg width="24" height="24" viewBox="0 0 24 24"><rect width="24" height="24" rx="3" fill="#0ba38b" /><path d="M5.500 24V11c0-9 14-8 14 0 0 7-10 7.500-10 1.500 0-4 5-4.500 5-1" fill="none" stroke="#fff" strokeWidth="2.200" /></svg>
        </div>
      </TaskIcon>
      <TaskIcon>
        <div className="relative"><ChromeLogo size={30} /><div className="absolute right-0 -bottom-px flex size-[15px] items-center justify-center rounded-full bg-[#8d6e63] font-['Roboto'] text-[10px] leading-none text-white">J</div></div>
      </TaskIcon>
      <TaskIcon>
        <svg width="30" height="30" viewBox="0 0 30 30"><rect x=".5" y=".5" width="29" height="29" rx="3" fill="#ee7325" stroke="#b9571b" /><path d="M9.500 7c2.500-1.500 4 .5 5.500 2 1.500-1.500 3-3.500 5.500-2 3.500 2 1.500 5.500.5 8 1 2.500 3 6-.5 8-2.500 1.500-4-.5-5.500-2-1.500 1.500-3 3.500-5.500 2-3.500-2-1.500-5.500-.5-8-1-2.500-3-6 .5-8z" fill="none" stroke="#fff" strokeWidth="3.600" /><path d="M9 15h4M17 15h4" stroke="#fff" strokeWidth="3" /></svg>
      </TaskIcon>
      <TaskIcon>
        <svg width="30" height="30" viewBox="0 0 30 30"><path d="M22 0l8 3.500v23L22 30z" fill="#27a2f2" /><path d="M22 0v8.500L4 22.500 0 20.500v-1.800z" fill="#0f7fd0" /><path d="M22 30v-8.500L4 7.500 0 9.500v1.800z" fill="#1b8fe0" /></svg>
      </TaskIcon>

      <div className="ml-auto flex items-center">
        <svg width="16" height="10" viewBox="0 0 16 10" fill="none" stroke="#111" strokeWidth="1.300"><path d="M.5 9L8 1.500 15.500 9" /></svg>
        <svg className="ml-[15px]" width="16" height="18" viewBox="0 0 16 18" fill="none" stroke="#111" strokeWidth="1.300"><rect x="1" y="4.500" width="10" height="9" rx="1" /><path d="M11 8l3.500-2.500v7L11 10M2.500 1.700c2-1.300 5-1.300 7 0M2.500 16.300c2 1.300 5 1.300 7 0" /></svg>
        <div className="relative mt-[2px] ml-[11px] h-[17px] w-5">
          <svg width="17" height="14" viewBox="0 0 17 14"><path d="M4 12.500C-.5 12 0 7 3.500 6.500 4 1 11 0 13 4c4 0 4 8-1 8.500z" fill="#9a9a9a" stroke="#333" strokeWidth="1.300" /></svg>
          <RedX />
        </div>
        <svg className="ml-[10px]" width="21" height="14" viewBox="0 0 21 14" fill="none" stroke="#111" strokeWidth="1.300"><path d="M6 2.500h13v10H6V9" /><path d="M8 4.500h9v6H8z" fill="#111" /><path d="M20.300 5.500v4M1.300 0v2.500M4.300 0v2.500M.5 2.500h4.800v2L2.900 6.500.5 4.500zM2.900 6.500V9H6" /></svg>
        <svg className="ml-[13px]" width="17" height="17" viewBox="0 0 17 17" fill="none" stroke="#333" strokeWidth="1.300"><path d="M1 16C1 8 8 1 16 1M4.700 16C4.700 10 10 4.700 16 4.700M8.400 16c0-4 3.600-7.600 7.600-7.600" /><circle cx="14" cy="14" r="1.700" fill="#111" stroke="none" /></svg>
        <div className="relative mt-[2px] ml-[10px] h-[18px] w-5">
          <svg width="10" height="15" viewBox="0 0 10 15" fill="none" stroke="#111" strokeWidth="1.300"><path d="M.7 4.500h2.600L7 1v12.500L3.300 10H.7z" /></svg>
          <RedX />
        </div>
        <div className="ml-[16px] w-[60px] text-center font-['Open_Sans'] text-[15px] leading-[23px] whitespace-nowrap text-[#222]">
          <div className="tracking-[-0.600px]">10:51 PM</div>
          <div className="tracking-[-0.350px]">4/7/2025</div>
        </div>
        <div className="relative ml-[27px] h-[20px] w-5">
          <svg width="20" height="21" viewBox="0 0 20 21"><path d="M0 0h20v16.500H9L5.500 20v-3.500H0z" fill="#000" /><path d="M4 4.500h12M4 8h12M4 11.500h8" stroke="#fff" strokeWidth="1.200" /></svg>
          <div className="absolute top-[8px] left-[8px] flex size-[22px] items-center justify-center rounded-full border border-[#777] bg-[#d9d5cc] font-['Open_Sans'] text-[14px] leading-none font-semibold tracking-[-0.800px] text-black">12</div>
        </div>
        <div className="ml-[25px] h-[50px] w-px bg-[#bdb5a7]" />
        <div className="w-[5px]" />
      </div>
    </footer>
  );
}

export default function App() {
  return (
    <div className="relative flex h-[1080px] w-[1920px] flex-col overflow-hidden bg-black font-['Lato',sans-serif]">
      <TabStrip />
      <Toolbar />
      <div className="flex min-h-0 flex-1 overflow-hidden">
        <Sidebar />
        <Content />
        <Scrollbar />
      </div>
      <AccountDialog />
      <FloatingWidgets />
      <Taskbar />
    </div>
  );
}
